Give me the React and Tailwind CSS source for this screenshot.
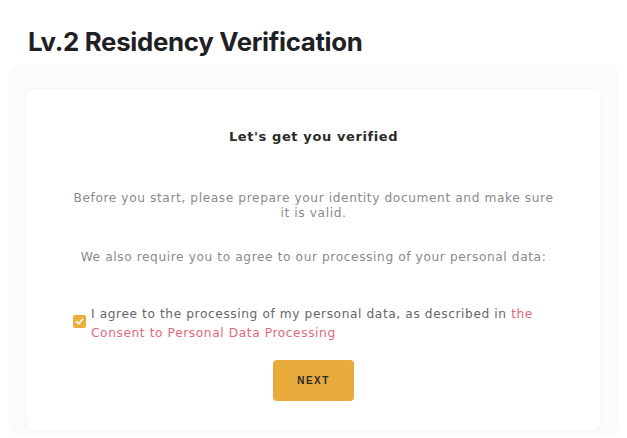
export default function App() {
  return (
    <div className="w-[627px] h-[438px] bg-white overflow-hidden relative">
      <div className="pt-[25px] pl-[28px]">
        <h1 className="text-[25.8px] leading-[34px] font-bold text-[#1e2026] tracking-[-0.3px]" style={{ fontFamily: "Inter, 'Liberation Sans', sans-serif" }}>
          Lv.2 Residency Verification
        </h1>
      </div>
      <div className="mt-[5px] mx-[9px] bg-[#fbfbfb] rounded-[10px] pt-[25px] px-[18px] pb-[6px]">
        <div className="bg-white rounded-[8px] shadow-[0_0_6px_rgba(0,0,0,0.03)] h-[341px] flex flex-col items-center text-[#6f6f6f]" style={{ fontFamily: "'DejaVu Sans', 'Open Sans', sans-serif" }}>
          <div className="mt-[38px] text-[13px] font-bold tracking-[0.6px] text-[#2b2b2b]">Let's get you verified</div>
          <p className="mt-[44px] text-[12.2px] tracking-[0.6px] leading-[15px] text-center w-[488px] text-[#8a8a8a]">
            Before you start, please prepare your identity document and make sure it is valid.
          </p>
          <p className="mt-[29px] text-[12.2px] tracking-[0.6px] leading-[15px] text-center text-[#8a8a8a]">
            We also require you to agree to our processing of your personal data:
          </p>
          <div className="mt-[40px] self-start ml-[46px] flex items-start gap-[5px]">
            <div className="mt-[10px] w-[13px] h-[13px] rounded-[2px] bg-[#e9b040] flex items-center justify-center shrink-0">
              <svg width="9" height="9" viewBox="0 0 10 10"><path d="M1.5 5.2 L4 7.5 L8.5 2.5" fill="none" stroke="white" strokeWidth="1.8" strokeLinecap="round" strokeLinejoin="round" /></svg>
            </div>
            <p className="text-[12.2px] tracking-[0.6px] leading-[19px] text-[#666] w-[450px]">
              I agree to the processing of my personal data, as described in <span className="text-[#e0697a]">the Consent to Personal Data Processing</span>
            </p>
          </div>
          <button className="mt-[17px] w-[81px] h-[41px] rounded-[4px] bg-[#e8ab3b] text-[10px] font-bold tracking-[1.5px] text-[#2a2a2a]" style={{ fontFamily: "'Liberation Sans', sans-serif" }}>
            NEXT
          </button>
        </div>
      </div>
    </div>
  );
}
